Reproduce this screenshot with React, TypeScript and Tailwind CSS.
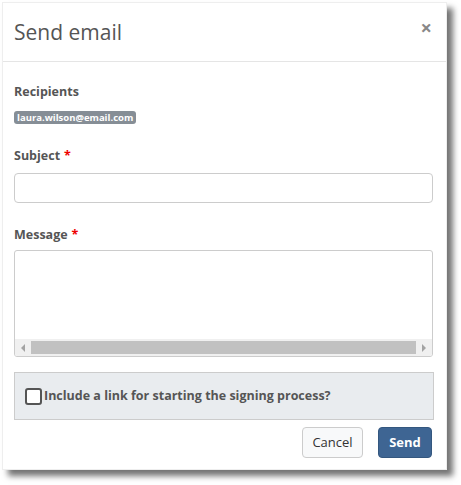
import React from 'react';

const font = { fontFamily: '"Open Sans", "Noto Sans", sans-serif' };

function Label({ text, required }: { text: string; required?: boolean }) {
  return (
    <div className="h-[18px] text-[12.5px] font-bold leading-[18px] text-[#555]">
      {text}
      {required && <span className="ml-1 text-[#e00]">*</span>}
    </div>
  );
}

export default function App() {
  return (
    <div className="h-[485px] w-[461px] overflow-hidden bg-white pl-[2px] pt-[2px]" style={font}>
      <div className="flex h-[468px] w-[445px] flex-col border border-[#eee] bg-white shadow-[6px_6px_6px_rgba(0,0,0,0.55)]">
        {/* header */}
        <div className="flex h-[59px] shrink-0 items-center justify-between border-b border-[#e5e5e5] pl-[11px] pr-[14px]">
          <h2 className="text-[21px] font-normal leading-none text-[#555]">Send email</h2>
          <button className="mb-[8px] text-[20px] font-bold leading-none text-[#888]">×</button>
        </div>

        {/* body */}
        <div className="flex flex-col px-[11px] pt-[21px]">
          <Label text="Recipients" />
          <div className="mt-[10px] flex">
            <span className="h-[13px] rounded-[3px] bg-[#868e96] px-[3px] text-[9.5px] font-bold leading-[13px] text-white">
              laura.wilson@email.com
            </span>
          </div>

          <div className="mt-[23px]">
            <Label text="Subject" required />
          </div>
          <input className="mt-[8px] h-[30px] w-[419px] rounded-[4px] border border-[#ccc] bg-white px-2 text-[13px] outline-none" />

          <div className="mt-[23px]">
            <Label text="Message" required />
          </div>
          <div className="mt-[6px] flex h-[107px] w-[419px] flex-col overflow-hidden rounded-[3px] border border-[#ccc]">
            <div className="flex-1" />
            {/* horizontal scrollbar */}
            <div className="flex h-[17px] items-center bg-[#f0f0f0]">
              <div className="flex w-[16px] justify-center">
                <div className="h-0 w-0 border-y-[4px] border-r-[4px] border-y-transparent border-r-[#a3a3a3]" />
              </div>
              <div className="h-[13px] flex-1 bg-[#c1c1c1]" />
              <div className="flex w-[16px] justify-center">
                <div className="h-0 w-0 border-y-[4px] border-l-[4px] border-y-transparent border-l-[#a3a3a3]" />
              </div>
            </div>
          </div>

          <div className="mt-[15px] flex h-[48px] w-[420px] items-center border border-[#ccc] bg-[#e9ecef] pl-[10px]">
            <span className="h-[17px] w-[17px] rounded-[3px] border-2 border-[#555] bg-white" />
            <span className="ml-[2px] text-[12.5px] font-bold text-[#555]">
              Include a link for starting the signing process?
            </span>
          </div>

          <div className="mt-[7px] flex w-[418px] justify-end gap-[15px]">
            <button className="h-[31px] w-[61px] rounded-[4px] border border-[#ccc] bg-[#f8f9fa] text-[13px] text-[#333]">
              Cancel
            </button>
            <button className="h-[31px] w-[54px] rounded-[4px] border border-[#34577f] bg-[#3e6593] text-[13px] font-bold text-white">
              Send
            </button>
          </div>
        </div>
      </div>
    </div>
  );
}
